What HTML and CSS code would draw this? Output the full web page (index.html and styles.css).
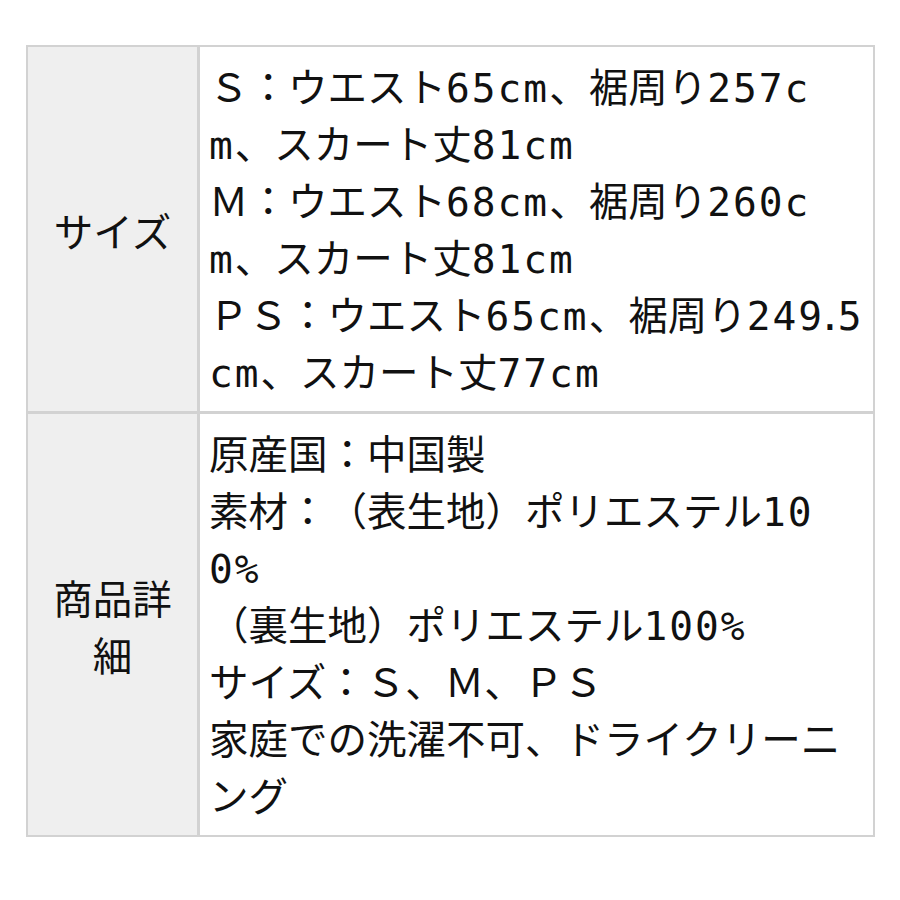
FILE: index.html
```html
<!DOCTYPE html>
<html lang="ja">
<head>
<meta charset="utf-8">
<link rel="stylesheet" href="styles.css">
</head>
<body>
<div class="page">
  <div class="spec">
    <div class="head">サイズ</div>
    <div class="body">Ｓ：ウエスト<span class="en">65cm</span>、裾周り<span class="en">257c</span><br><span class="en">m</span>、スカート丈<span class="en">81cm</span><br>Ｍ：ウエスト<span class="en">68cm</span>、裾周り<span class="en">260c</span><br><span class="en">m</span>、スカート丈<span class="en">81cm</span><br>ＰＳ：ウエスト<span class="en">65cm</span>、裾周り<span class="en">24<span class="tight">9.</span>5</span><br><span class="en">cm</span>、スカート丈<span class="en">77cm</span></div>
    <div class="head">商品詳細</div>
    <div class="body">原産国：中国製<br>素材：（表生地）ポリエステル<span class="en">10</span><br><span class="en">0%</span><br>（裏生地）ポリエステル<span class="en">100%</span><br>サイズ：Ｓ、Ｍ、ＰＳ<br>家庭での洗濯不可、ドライクリーニ<br>ング</div>
  </div>
</div>
</body>
</html>
```
FILE: styles.css
```css
html, body {
  margin: 0;
  padding: 0;
  background: #ffffff;
}
.page {
  padding: 45px 25px 0 26px;
}
.spec {
  display: grid;
  grid-template-columns: 169px minmax(0, 1fr);
  gap: 3px;
  background: #d2d2d2;
  border: 2px solid #d2d2d2;
  font-family: "Noto Sans CJK JP", "Noto Sans", sans-serif;
  font-size: 39.5px;
  line-height: 57px;
  color: #111111;
  text-spacing-trim: space-all;
}
.head {
  background: #efefef;
  display: flex;
  align-items: center;
  justify-content: center;
  text-align: center;
  padding: 0 22px;
}
.body {
  background: #ffffff;
  padding: 9px 0 13px 9px;
  white-space: nowrap;
  overflow: visible;
}
.en {
  font-family: "DejaVu Sans Mono", monospace;
  letter-spacing: 2px;
  line-height: 1;
}
.tight {
  letter-spacing: -4px;
}
```
